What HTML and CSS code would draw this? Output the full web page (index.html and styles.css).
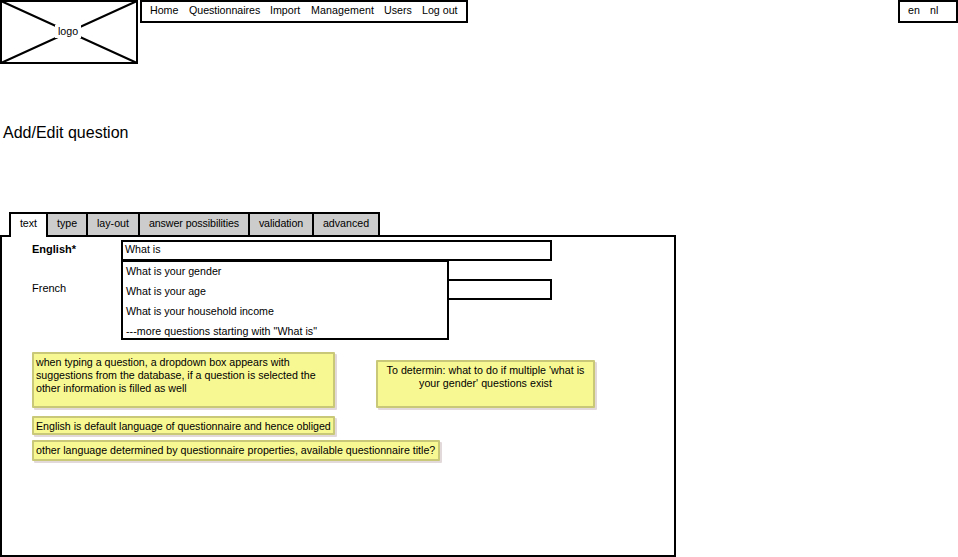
FILE: index.html
```
<!DOCTYPE html>
<html lang="en">
<head>
<meta charset="utf-8">
<title>Add/Edit question</title>
<link rel="stylesheet" href="styles.css">
</head>
<body>
<header class="header">
  <div class="logo">
    <svg class="logo-cross" width="138" height="64" viewBox="0 0 138 64"><path d="M1 1L137 63M137 1L1 63" stroke="#000" stroke-width="2"/></svg>
    <span class="logo-text">logo</span>
  </div>
  <nav class="menu">
    <a>Home</a><a class="tight">Questionnaires</a><a>Import</a><a class="loose">Management</a><a>Users</a><a>Log out</a>
  </nav>
  <nav class="menu languages"><a>en</a><a>nl</a></nav>
</header>
<h1 class="title">Add/Edit question</h1>
<div class="tabs">
  <div class="tab active">text</div>
  <div class="tab type">type</div>
  <div class="tab layout">lay-out</div>
  <div class="tab answers">answer possibilities</div>
  <div class="tab validation">validation</div>
  <div class="tab advanced">advanced</div>
</div>
<main class="panel">
  <div class="row">
    <label class="label required">English*</label>
    <div class="field">What is
      <ul class="suggestions">
        <li>What is your gender</li>
        <li>What is your age</li>
        <li class="tight">What is your household income</li>
        <li class="more">---more questions starting with "What is"</li>
      </ul>
    </div>
  </div>
  <div class="row">
    <label class="label">French</label>
    <div class="field"></div>
  </div>
  <div class="notes">
    <div class="note-row">
      <div class="note typing">when typing a question, a dropdown box appears with<br>suggestions from the database, if a question is selected the<br>other information is filled as well</div>
      <div class="note determine">To determin: what to do if multiple 'what is<br>your gender' questions exist</div>
    </div>
    <div class="note default-language">English is default language of questionnaire and hence obliged</div>
    <div class="note other-language">other language determined by questionnaire properties, available questionnaire title?</div>
  </div>
</main>
</body>
</html>
```
FILE: styles.css
```
* { box-sizing: border-box; }
body {
  margin: 0;
  height: 557px;
  overflow: hidden;
  background: #fff;
  color: #000;
  font: 10.667px/13px "Liberation Sans", Arial, sans-serif;
}
.header { display: flex; align-items: flex-start; height: 64px; }
.logo {
  display: grid;
  place-items: center;
  width: 138px;
  height: 64px;
  margin-right: 2px;
  border: 2px solid #000;
}
.logo-cross, .logo-text { grid-area: 1 / 1; }
.logo-cross { margin: -2px; }
.logo-text { z-index: 1; margin: 0 2px 2px 0; background: #fff; padding: 0 3px; }
.menu {
  display: grid;
  grid-template-columns: 29px 71px 31px 63px 28px 36px;
  column-gap: 10px;
  width: 328px;
  height: 23px;
  padding: 2px 8px;
  border: 2px solid #000;
  white-space: nowrap;
}
.languages { width: 60px; grid-template-columns: 12px 12px; margin-left: auto; }
.tight { letter-spacing: -0.03px; }
.loose { letter-spacing: 0.08px; }
.more { letter-spacing: 0.04px; }
.title { margin: 60px 0 0 3px; height: 88px; font-size: 16px; line-height: 18px; font-weight: normal; }
.tabs { display: flex; height: 23px; margin-left: 9px; }
.tab {
  height: 23px;
  border: solid #000;
  border-width: 2px 0 0 2px;
  padding-top: 3px;
  background: #ccc;
  text-align: center;
  white-space: nowrap;
}
.active { width: 37px; height: 25px; background: #fff; z-index: 1; }
.type { width: 40px; }
.layout { width: 52px; }
.answers { width: 110px; letter-spacing: -0.08px; }
.validation { width: 64px; letter-spacing: -0.08px; }
.advanced { width: 68px; border-right-width: 2px; }
.panel { width: 676px; height: 322px; border: 2px solid #000; padding: 3px 0 0 30px; }
.row { display: flex; height: 39px; }
.label { width: 89px; padding-top: 3px; font-size: 11px; }
.required { font-weight: bold; }
.field {
  position: relative;
  width: 431px;
  height: 21px;
  padding: 1px 2px;
  border: 2px solid #000;
}
.suggestions {
  position: absolute;
  z-index: 2;
  top: 18px;
  left: -2px;
  width: 328px;
  height: 80px;
  margin: 0;
  padding: 0 3px;
  border: 2px solid #000;
  background: #fff;
  list-style: none;
  line-height: 20px;
}
.suggestions li { margin-top: -1px; margin-bottom: 1px; }
.notes { display: flex; flex-direction: column; align-items: flex-start; margin-top: 34px; }
.note-row { display: flex; align-items: flex-end; gap: 41px; margin-bottom: 8px; }
.note {
  border: 2px solid #c8c878;
  border-radius: 1px;
  padding: 2px;
  background: #f8f893;
  box-shadow: 2px 2px 0 #e2dada;
  white-space: nowrap;
}
.typing { width: 303px; height: 56px; letter-spacing: -0.01px; }
.determine { width: 219px; height: 48px; text-align: center; letter-spacing: 0.02px; }
.default-language { width: 303px; height: 19px; margin-bottom: 5px; letter-spacing: -0.025px; }
.other-language { width: 408px; height: 21px; }
```
